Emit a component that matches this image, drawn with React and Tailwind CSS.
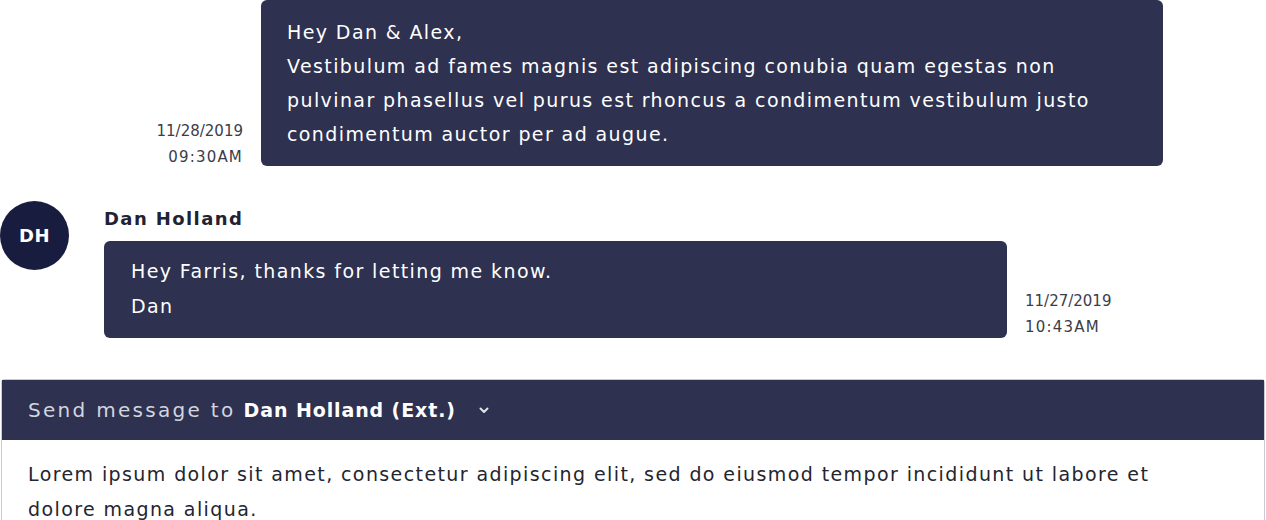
import React from "react";

const font = { fontFamily: '"DejaVu Sans", "Liberation Sans", sans-serif' };

export default function App() {
  return (
    <div className="w-[1266px] h-[520px] overflow-hidden bg-white" style={font}>
      <div className="flex flex-col">
        {/* own message */}
        <div className="flex items-end justify-end pr-[103px]">
          <div className="text-right text-[15px] leading-[26px] text-[#3a3d4a] mr-[18px] mb-[-4px]">
            <div>11/28/2019</div>
            <div className="tracking-[1.2px]">09:30AM</div>
          </div>
          <div className="w-[902px] h-[166px] rounded-md bg-[#2e3150] pl-[26px] pr-[10px] pt-[15px] text-[19px] leading-[34px] text-white whitespace-nowrap tracking-[1.4px]">
            <div>Hey Dan &amp; Alex,</div>
            <div>Vestibulum ad fames magnis est adipiscing conubia quam egestas non</div>
            <div>pulvinar phasellus vel purus est rhoncus a condimentum vestibulum justo</div>
            <div>condimentum auctor per ad augue.</div>
          </div>
        </div>

        {/* incoming message */}
        <div className="flex mt-[35px]">
          <div className="w-[69px] h-[69px] rounded-full bg-[#181c3f] flex items-center justify-center text-white font-bold text-[18px] tracking-[0.5px]">
            DH
          </div>
          <div className="ml-[35px] flex flex-col">
            <div className="text-[18px] font-bold text-[#1f2333] leading-[24px] mt-[6px] tracking-[1.4px]">Dan Holland</div>
            <div className="flex items-end mt-[10px]">
              <div className="w-[903px] h-[97px] rounded-md bg-[#2e3150] pl-[27px] pt-[13px] text-[19px] leading-[35px] text-white tracking-[1.4px]">
                <div>Hey Farris, thanks for letting me know.</div>
                <div>Dan</div>
              </div>
              <div className="ml-[18px] text-[15px] leading-[26px] text-[#3a3d4a] mb-[-2px]">
                <div>11/27/2019</div>
                <div className="tracking-[1.2px]">10:43AM</div>
              </div>
            </div>
          </div>
        </div>

        {/* composer */}
        <div className="mt-[41px] ml-[1px] mr-[1px] border-x border-t border-[#c9cbd3] rounded-t-sm">
          <div className="h-[60px] bg-[#2e3150] flex items-center px-[26px]">
            <span className="font-normal text-[20px] text-[#d3d5de] tracking-[2.3px]">Send message to</span>
            <span className="ml-[8px] font-bold text-white text-[19px] tracking-[0.9px]">Dan Holland (Ext.)</span>
            <svg className="ml-[22px]" width="12" height="12" viewBox="0 0 12 12" fill="none">
              <path d="M2.5 4.5 L6 8 L9.5 4.5" stroke="#e1e2e8" strokeWidth="2" strokeLinecap="round" strokeLinejoin="round" />
            </svg>
          </div>
          <div className="bg-white px-[26px] pt-[17px] text-[19px] leading-[35px] text-[#23252f] whitespace-nowrap tracking-[1.4px]">
            <div>Lorem ipsum dolor sit amet, consectetur adipiscing elit, sed do eiusmod tempor incididunt ut labore et</div>
            <div>dolore magna aliqua.</div>
          </div>
        </div>
      </div>
    </div>
  );
}
